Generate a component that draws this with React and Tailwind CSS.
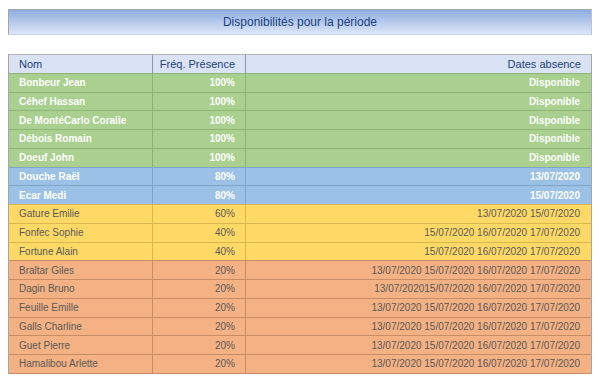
import React from "react";

const rows = [
  { nom: "Bonbeur Jean", freq: "100%", dates: "Disponible", tone: "green" },
  { nom: "Céhef Hassan", freq: "100%", dates: "Disponible", tone: "green" },
  { nom: "De MontéCarlo Coralie", freq: "100%", dates: "Disponible", tone: "green" },
  { nom: "Débois Romain", freq: "100%", dates: "Disponible", tone: "green" },
  { nom: "Doeuf John", freq: "100%", dates: "Disponible", tone: "green" },
  { nom: "Douche Raël", freq: "80%", dates: "13/07/2020", tone: "blue" },
  { nom: "Ecar Medi", freq: "80%", dates: "15/07/2020", tone: "blue" },
  { nom: "Gature Emilie", freq: "60%", dates: "13/07/2020 15/07/2020", tone: "yellow" },
  { nom: "Fonfec Sophie", freq: "40%", dates: "15/07/2020 16/07/2020 17/07/2020", tone: "yellow" },
  { nom: "Fortune Alain", freq: "40%", dates: "15/07/2020 16/07/2020 17/07/2020", tone: "yellow" },
  { nom: "Braltar Giles", freq: "20%", dates: "13/07/2020 15/07/2020 16/07/2020 17/07/2020", tone: "orange" },
  { nom: "Dagin Bruno", freq: "20%", dates: "13/07/202015/07/2020 16/07/2020 17/07/2020", tone: "orange" },
  { nom: "Feuille Emille", freq: "20%", dates: "13/07/2020 15/07/2020 16/07/2020 17/07/2020", tone: "orange" },
  { nom: "Galls Charline", freq: "20%", dates: "13/07/2020 15/07/2020 16/07/2020 17/07/2020", tone: "orange" },
  { nom: "Guet Pierre", freq: "20%", dates: "13/07/2020 15/07/2020 16/07/2020 17/07/2020", tone: "orange" },
  { nom: "Hamalibou Arlette", freq: "20%", dates: "13/07/2020 15/07/2020 16/07/2020 17/07/2020", tone: "orange" },
];

const tones = {
  green: "bg-[#a9d08e] border-[#8fb477] text-white font-bold",
  blue: "bg-[#9bc2e6] border-[#7fa5c9] text-white font-bold",
  yellow: "bg-[#ffd966] border-[#d9b84f] text-[#595959]",
  orange: "bg-[#f4b183] border-[#c98d66] text-[#595959]",
};

const cols = "grid grid-cols-[144px_93px_1fr]";

export default function App() {
  return (
    <div className="w-[600px] h-[383px] bg-white px-2 pt-[9px] font-['Liberation_Sans',Arial,sans-serif] text-[10px]">
      <div className="h-[26px] flex items-center justify-center border border-[#a6a6a6] border-b-[#c9d3e6] border-r-[#b8c4da] bg-gradient-to-b from-[#8eade0] to-[#dde7f7] text-[12px] text-[#213f7e]">
        Disponibilités pour la période
      </div>

      <div className="mt-[19px] border-l border-r border-[#a6a6a6]">
        <div className={`${cols} h-[18.75px] bg-[#dae3f3] text-[#213f7e] text-[11px] border-t border-[#b4b4b4]`}>
          <div className="flex items-center pl-[10px] border-r border-[#8c9aae]">Nom</div>
          <div className="flex items-center justify-end pr-[10px] border-r border-[#8c9aae]">Fréq. Présence</div>
          <div className="flex items-center justify-end pr-[10px]">Dates absence</div>
        </div>
        {rows.map((r) => (
          <div key={r.nom} className={`${cols} h-[18.75px] border-t ${tones[r.tone]}`}>
            <div className={`flex items-center pl-[10px] border-r ${tones[r.tone]}`}>{r.nom}</div>
            <div className={`flex items-center justify-end pr-[10px] border-r ${tones[r.tone]}`}>{r.freq}</div>
            <div className="flex items-center justify-end pr-[11px] whitespace-pre">{r.dates}</div>
          </div>
        ))}
        <div className="border-t border-[#c98d66]" />
      </div>
    </div>
  );
}
